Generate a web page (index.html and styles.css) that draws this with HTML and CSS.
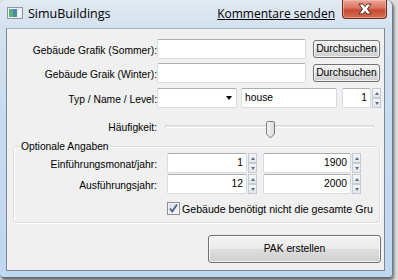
FILE: index.html
```html
<!DOCTYPE html>
<html lang="de">
<head>
    <meta charset="UTF-8">
    <title>SimuBuildings</title>
    <link rel="stylesheet" href="styles.css">
</head>
<body>
    <div class="window">
        <div class="titlebar">
            <svg class="app-icon" width="16" height="12" viewBox="0 0 16 12">
                <rect x="0.5" y="0.5" width="15" height="11" fill="#f4f6f8" stroke="#8c96a0"/>
                <rect x="2" y="2" width="8" height="8" fill="#3f9a8c"/>
                <rect x="2" y="2" width="4" height="8" fill="#5fb07a"/>
                <rect x="6" y="2" width="4" height="4" fill="#4a84c8"/>
                <rect x="11" y="2" width="3" height="8" fill="#ffffff" stroke="#c8ced4" stroke-width="0.5"/>
            </svg>
            <span class="title">SimuBuildings</span>
            <a class="feedback" href="#">Kommentare senden</a>
            <div class="close-btn">
                <svg width="16" height="12" viewBox="0 0 16 12">
                    <path d="M2 1 H6 L8 3.5 L10 1 H14 L10.5 6 L14 11 H10 L8 8.5 L6 11 H2 L5.5 6 Z" fill="#ffffff" stroke="#5a2a24" stroke-width="1" stroke-linejoin="round"/>
                </svg>
            </div>
        </div>

        <div class="client">
            <!-- Grafiken -->
            <div class="row row-first">
                <span class="lbl">Gebäude Grafik (Sommer):</span>
                <div class="textbox path"></div>
                <div class="btn browse">Durchsuchen</div>
            </div>
            <div class="row row-second">
                <span class="lbl">Gebäude Graik (Winter):</span>
                <div class="textbox path"></div>
                <div class="btn browse">Durchsuchen</div>
            </div>

            <!-- Typ / Name / Level -->
            <div class="row row-third">
                <span class="lbl">Typ / Name / Level:</span>
                <div class="textbox combo"><span class="arrow"></span></div>
                <div class="textbox name">house</div>
                <div class="numeric level">
                    <div class="textbox num">1</div>
                    <div class="spin"><i class="up"></i><i class="down"></i></div>
                </div>
            </div>

            <div class="row row-slider">
                <span class="lbl">Häufigkeit:</span>
                <div class="track">
                    <svg class="thumb" width="11" height="18" viewBox="0 0 11 18">
                        <defs>
                            <linearGradient id="tg" x1="0" x2="1" y1="0" y2="0">
                                <stop offset="0" stop-color="#f4f4f4"/>
                                <stop offset="1" stop-color="#d8d8d8"/>
                            </linearGradient>
                        </defs>
                        <path d="M1.5 1.5 Q1.5 0.5 2.5 0.5 H8.5 Q9.5 0.5 9.5 1.5 V13 L5.5 17 L1.5 13 Z" fill="url(#tg)" stroke="#7d7d7d"/>
                    </svg>
                </div>
            </div>

            <!-- Optionale Angaben -->
            <div class="group">
                <div class="group-title">Optionale Angaben</div>
                <div class="grow">
                    <span class="glbl">Einführungsmonat/jahr:</span>
                    <div class="numeric month">
                        <div class="textbox num">1</div>
                        <div class="spin"><i class="up"></i><i class="down"></i></div>
                    </div>
                    <div class="numeric year">
                        <div class="textbox num">1900</div>
                        <div class="spin"><i class="up"></i><i class="down"></i></div>
                    </div>
                </div>
                <div class="grow grow-second">
                    <span class="glbl">Ausführungsjahr:</span>
                    <div class="numeric month">
                        <div class="textbox num">12</div>
                        <div class="spin"><i class="up"></i><i class="down"></i></div>
                    </div>
                    <div class="numeric year">
                        <div class="textbox num">2000</div>
                        <div class="spin"><i class="up"></i><i class="down"></i></div>
                    </div>
                </div>
                <div class="check-row">
                    <svg class="checkbox" width="13" height="13" viewBox="0 0 13 13">
                        <defs>
                            <linearGradient id="cg" x1="0" x2="1" y1="0" y2="1">
                                <stop offset="0" stop-color="#d9dde2"/>
                                <stop offset="1" stop-color="#f7f7f7"/>
                            </linearGradient>
                        </defs>
                        <rect x="0.5" y="0.5" width="12" height="12" fill="#f4f4f4" stroke="#8e8f8f"/>
                        <rect x="2" y="2" width="9" height="9" fill="url(#cg)"/>
                        <path d="M3 6.5 L5.2 9.5 L10 2.5" fill="none" stroke="#4a5f97" stroke-width="1.8"/>
                    </svg>
                    <span class="check-text">Gebäude benötigt nicht die gesamte Gru</span>
                </div>
            </div>

            <div class="btn pak">PAK erstellen</div>
        </div>
    </div>
</body>
</html>
```
FILE: styles.css
```css
* {
    margin: 0;
    padding: 0;
    box-sizing: border-box;
}

body {
    width: 398px;
    height: 280px;
    overflow: hidden;
    background: #dedede;
    font-family: 'Liberation Sans', Arial, sans-serif;
    font-size: 10.3px;
    color: #000;
}

.window {
    width: 393px;
    height: 278px;
    border-radius: 6px 6px 4px 4px;
    border-right: 1px solid #6d7c8c;
    border-bottom: 1px solid #5e6b78;
    background: linear-gradient(180deg, #e2e9f1 0%, #d4e1ef 10%, #c8dbf0 40%, #c0d7f1 100%);
    box-shadow: 1px 2px 3px rgba(0, 0, 0, 0.55);
}

/* Titelleiste */
.titlebar {
    height: 28px;
    display: flex;
    align-items: flex-start;
}

.app-icon {
    margin: 7px 0 0 7px;
}

.title {
    margin: 5px 0 0 5px;
    font-family: 'Open Sans', 'Noto Sans', sans-serif;
    font-size: 12.5px;
    line-height: 17px;
}

.feedback {
    margin: 5px 0 0 auto;
    font-family: 'Open Sans', 'Noto Sans', sans-serif;
    font-size: 12px;
    line-height: 17px;
    color: #000;
    text-decoration: underline;
}

.close-btn {
    width: 45px;
    height: 19px;
    margin: 0 5px 0 7px;
    border: 1px solid #6b2c22;
    border-top: none;
    border-radius: 0 0 4px 4px;
    background: linear-gradient(180deg, #eaa796 0%, #d9735f 45%, #c84a33 55%, #d26e52 100%);
    box-shadow: inset 0 0 0 1px rgba(255, 200, 190, 0.5);
    display: flex;
    align-items: center;
    justify-content: center;
}

/* Clientbereich */
.client {
    width: 379px;
    height: 243px;
    margin-left: 6px;
    border: 1px solid #7d8894;
    border-top-color: #a3afbb;
    background: #f0f0f0;
    padding-top: 10px;
}

.row {
    display: flex;
    align-items: center;
    height: 20px;
}

.row-second {
    margin-top: 4px;
}

.row-third {
    margin-top: 5px;
}

.row-slider {
    margin-top: 9px;
    height: 18px;
}

.lbl {
    width: 150px;
    text-align: right;
    padding-top: 2px;
    flex-shrink: 0;
}

.textbox {
    height: 20px;
    background: #fff;
    border: 1px solid #d6dbe2;
    border-top-color: #abadb3;
    border-radius: 2px;
    line-height: 18px;
    padding: 0 3px;
}

.path {
    width: 149px;
}

.btn {
    border: 1px solid #707070;
    border-radius: 3px;
    background: linear-gradient(180deg, #f2f2f2 0%, #ebebeb 48%, #dddddd 52%, #cfcfcf 100%);
    box-shadow: inset 0 0 0 1px rgba(255, 255, 255, 0.7);
    text-align: center;
}

.browse {
    width: 67px;
    height: 18px;
    line-height: 16px;
    margin-left: 7px;
}

.combo {
    width: 80px;
    display: flex;
    align-items: center;
    justify-content: flex-end;
    padding-right: 4px;
}

.arrow {
    width: 0;
    height: 0;
    border-left: 3.5px solid transparent;
    border-right: 3.5px solid transparent;
    border-top: 4px solid #000;
}

.name {
    width: 96px;
    margin-left: 4px;
}

.numeric {
    display: flex;
    height: 20px;
}

.num {
    text-align: right;
    flex: 1;
}

.spin {
    width: 9px;
    margin-left: 1px;
    display: flex;
    flex-direction: column;
}

.spin i {
    flex: 1;
    border: 1px solid #c4cbd3;
    background: linear-gradient(180deg, #f5f6f7, #e3e6ea);
    display: flex;
    align-items: center;
    justify-content: center;
}

.spin i::after {
    content: "";
    border-left: 2.5px solid transparent;
    border-right: 2.5px solid transparent;
}

.spin .up::after {
    border-bottom: 3px solid #5a6f96;
}

.spin .down::after {
    border-top: 3px solid #5a6f96;
}

.level {
    width: 39px;
    margin-left: 5px;
}

.track {
    width: 209px;
    height: 3px;
    margin-left: 8px;
    border: 1px solid #d6d6d6;
    border-bottom-color: #fff;
    background: #e7eaea;
    display: flex;
    align-items: center;
    padding-left: 99px;
}

.thumb {
    flex-shrink: 0;
    margin-top: 8px;
}

/* Gruppe */
.group {
    margin: 11px 4px 0 6px;
    height: 77px;
    border: 1px solid #d5dfe5;
    border-radius: 3px;
    box-shadow: inset 1px 1px 0 #fff, 1px 1px 0 #fff;
}

.group-title {
    width: fit-content;
    margin: -7px 0 0 6px;
    padding: 0 1px;
    line-height: 13px;
    background: #f0f0f0;
}

.grow {
    display: flex;
    align-items: center;
    height: 20px;
}

.grow-second {
    margin-top: 1px;
}

.glbl {
    width: 143px;
    text-align: right;
    padding-top: 2px;
    flex-shrink: 0;
}

.month {
    width: 90px;
    margin-left: 10px;
}

.year {
    width: 98px;
    margin-left: 6px;
}

.check-row {
    display: flex;
    align-items: center;
    margin: 8px 0 0 153px;
    white-space: nowrap;
}

.checkbox {
    flex-shrink: 0;
}

.check-text {
    margin-left: 2px;
    font-size: 10.6px;
}

.pak {
    width: 173px;
    height: 28px;
    line-height: 26px;
    margin: 12px 0 0 201px;
}
```
